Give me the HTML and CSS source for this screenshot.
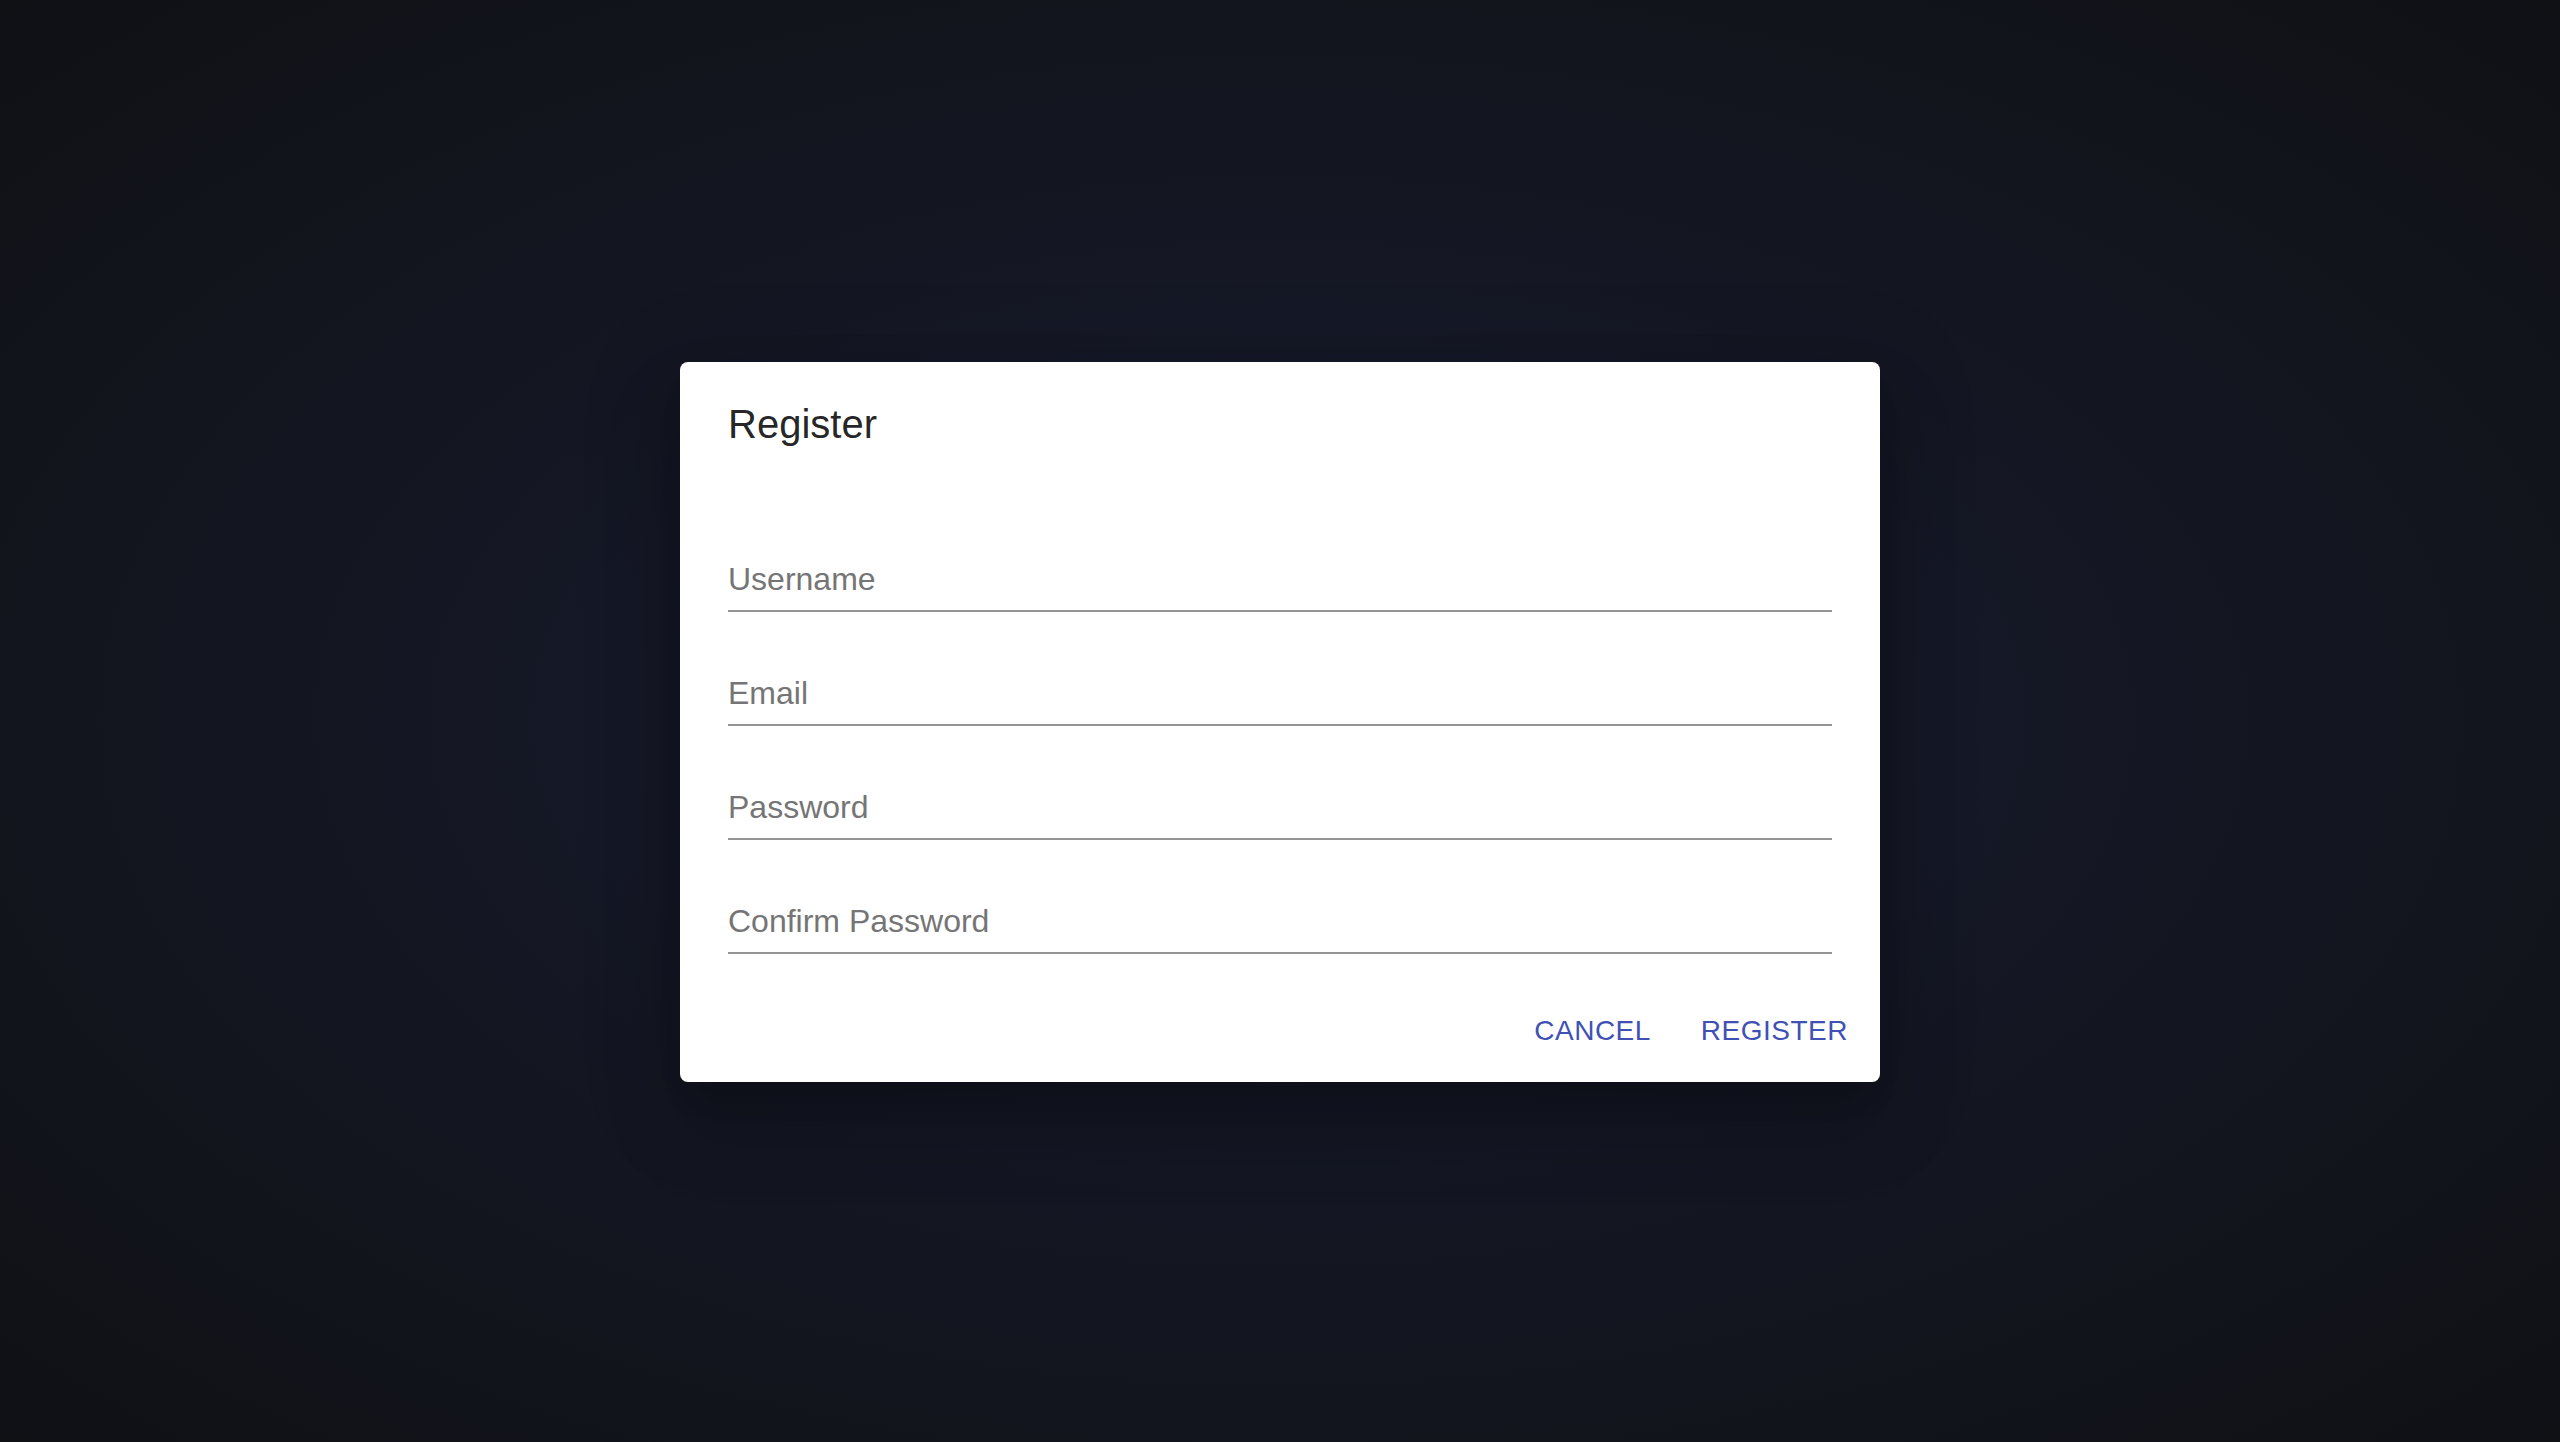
FILE: index.html
```html
<!DOCTYPE html>
<html lang="en">
<head>
<meta charset="utf-8">
<title>Register</title>
<link rel="stylesheet" href="styles.css">
</head>
<body>
<div class="backdrop">
  <div class="dialog" role="dialog" aria-labelledby="dlg-title">
    <h2 class="dialog-title" id="dlg-title">Register</h2>
    <div class="dialog-content">
      <div class="field"><div class="input"><span class="placeholder">Username</span></div></div>
      <div class="field"><div class="input"><span class="placeholder">Email</span></div></div>
      <div class="field"><div class="input"><span class="placeholder">Password</span></div></div>
      <div class="field"><div class="input"><span class="placeholder">Confirm Password</span></div></div>
    </div>
    <div class="dialog-actions">
      <button class="btn" type="button">Cancel</button>
      <button class="btn" type="button">Register</button>
    </div>
  </div>
</div>
</body>
</html>
```
FILE: styles.css
```css
html, body {
  margin: 0;
  padding: 0;
  height: 100%;
}
body {
  font-family: "Liberation Sans", Arial, Helvetica, sans-serif;
  background: #101114;
}
.backdrop {
  height: 100%;
  display: flex;
  align-items: center;
  justify-content: center;
  background: radial-gradient(ellipse 75% 75% at 50% 50%, #171b29 0%, #151826 35%, #12141c 70%, #0f1013 100%);
}
.dialog {
  width: 1200px;
  height: 720px;
  box-sizing: border-box;
  background: #fff;
  border-radius: 8px;
  display: flex;
  flex-direction: column;
  box-shadow: 0 22px 30px -14px rgba(0,0,0,0.2), 0 48px 76px 6px rgba(0,0,0,0.14), 0 18px 92px 16px rgba(0,0,0,0.12);
  transform: translateY(1px);
}
.dialog-title {
  margin: 0;
  padding: 30px 48px 34px;
  font-size: 40px;
  font-weight: 400;
  line-height: 64px;
  color: rgba(0,0,0,0.87);
}
.dialog-content {
  padding: 8px 48px 0;
}
.field {
  padding-top: 50px;
}
.input {
  height: 38px;
  padding: 12px 0 12px;
  border-bottom: 2px solid #949494;
  font-size: 32px;
  line-height: 38px;
}
.placeholder {
  color: #757575;
}
.dialog-actions {
  margin-top: auto;
  padding: 16px;
  display: flex;
  justify-content: flex-end;
  gap: 18px;
}
.btn {
  font-family: "Liberation Sans", Arial, Helvetica, sans-serif;
  font-size: 28px;
  line-height: 49px;
  letter-spacing: 0.5px;
  text-transform: uppercase;
  color: #3f51b5;
  background: transparent;
  border: 0;
  border-radius: 8px;
  padding: 12px 16px 11px;
  min-width: 128px;
  cursor: pointer;
}
```
